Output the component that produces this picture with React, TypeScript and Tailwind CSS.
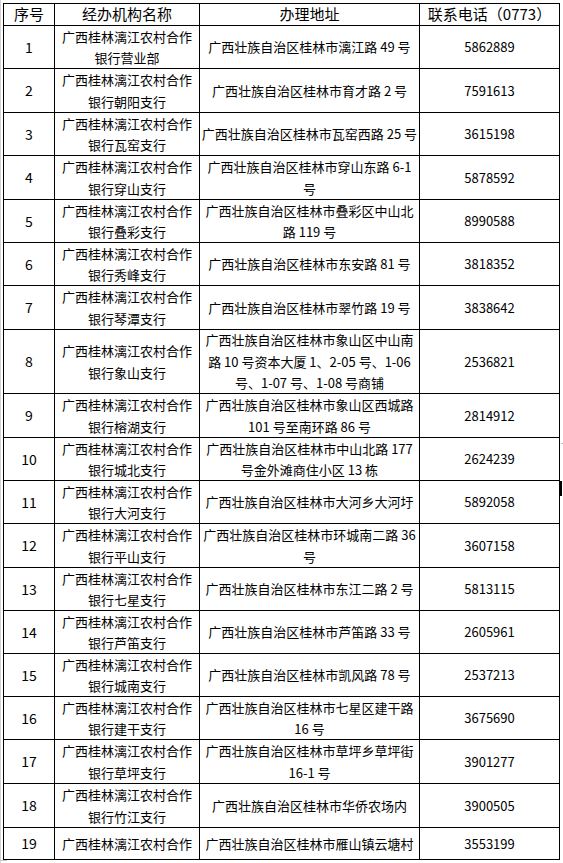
const rows: { no: string; name: string[]; addr: string[]; tel: string; h: string }[] = [
  { no: "1", name: ["广西桂林漓江农村合作", "银行营业部"], addr: ["广西壮族自治区桂林市漓江路 49 号"], tel: "5862889", h: "h-[43px]" },
  { no: "2", name: ["广西桂林漓江农村合作", "银行朝阳支行"], addr: ["广西壮族自治区桂林市育才路 2 号"], tel: "7591613", h: "h-[44px]" },
  { no: "3", name: ["广西桂林漓江农村合作", "银行瓦窑支行"], addr: ["广西壮族自治区桂林市瓦窑西路 25 号"], tel: "3615198", h: "h-[43px]" },
  { no: "4", name: ["广西桂林漓江农村合作", "银行穿山支行"], addr: ["广西壮族自治区桂林市穿山东路 6-1", "号"], tel: "5878592", h: "h-[44px]" },
  { no: "5", name: ["广西桂林漓江农村合作", "银行叠彩支行"], addr: ["广西壮族自治区桂林市叠彩区中山北", "路 119 号"], tel: "8990588", h: "h-[43px]" },
  { no: "6", name: ["广西桂林漓江农村合作", "银行秀峰支行"], addr: ["广西壮族自治区桂林市东安路 81 号"], tel: "3818352", h: "h-[43px]" },
  { no: "7", name: ["广西桂林漓江农村合作", "银行琴潭支行"], addr: ["广西壮族自治区桂林市翠竹路 19 号"], tel: "3838642", h: "h-[44px]" },
  {
    no: "8",
    name: ["广西桂林漓江农村合作", "银行象山支行"],
    addr: ["广西壮族自治区桂林市象山区中山南", "路 10 号资本大厦 1、2-05 号、1-06", "号、1-07 号、1-08 号商铺"],
    tel: "2536821",
    h: "h-[64px]",
  },
  { no: "9", name: ["广西桂林漓江农村合作", "银行榕湖支行"], addr: ["广西壮族自治区桂林市象山区西城路", "101 号至南环路 86 号"], tel: "2814912", h: "h-[44px]" },
  { no: "10", name: ["广西桂林漓江农村合作", "银行城北支行"], addr: ["广西壮族自治区桂林市中山北路 177", "号金外滩商住小区 13 栋"], tel: "2624239", h: "h-[43px]" },
  { no: "11", name: ["广西桂林漓江农村合作", "银行大河支行"], addr: ["广西壮族自治区桂林市大河乡大河圩"], tel: "5892058", h: "h-[43px]" },
  { no: "12", name: ["广西桂林漓江农村合作", "银行平山支行"], addr: ["广西壮族自治区桂林市环城南二路 36", "号"], tel: "3607158", h: "h-[44px]" },
  { no: "13", name: ["广西桂林漓江农村合作", "银行七星支行"], addr: ["广西壮族自治区桂林市东江二路 2 号"], tel: "5813115", h: "h-[43px]" },
  { no: "14", name: ["广西桂林漓江农村合作", "银行芦笛支行"], addr: ["广西壮族自治区桂林市芦笛路 33 号"], tel: "2605961", h: "h-[43px]" },
  { no: "15", name: ["广西桂林漓江农村合作", "银行城南支行"], addr: ["广西壮族自治区桂林市凯风路 78 号"], tel: "2537213", h: "h-[43px]" },
  { no: "16", name: ["广西桂林漓江农村合作", "银行建干支行"], addr: ["广西壮族自治区桂林市七星区建干路", "16 号"], tel: "3675690", h: "h-[43px]" },
  { no: "17", name: ["广西桂林漓江农村合作", "银行草坪支行"], addr: ["广西壮族自治区桂林市草坪乡草坪街", "16-1 号"], tel: "3901277", h: "h-[44px]" },
  { no: "18", name: ["广西桂林漓江农村合作", "银行竹江支行"], addr: ["广西壮族自治区桂林市华侨农场内"], tel: "3900505", h: "h-[44px]" },
  { no: "19", name: ["广西桂林漓江农村合作"], addr: ["广西壮族自治区桂林市雁山镇云塘村"], tel: "3553199", h: "h-[32px]" },
];

function Cell({ w, children, className = "" }: { w: string; children: React.ReactNode; className?: string }) {
  return (
    <div className={`${w} shrink-0 flex flex-col items-center justify-center border-r border-b border-black text-center ${className}`}>
      {children}
    </div>
  );
}

function Lines({ lines }: { lines: string[] }) {
  return (
    <>
      {lines.map((l) => (
        <div key={l} className="whitespace-nowrap leading-[21.5px]">
          {l}
        </div>
      ))}
    </>
  );
}

export default function App() {
  return (
    <div
      className="relative w-[563px] h-[863px] bg-white text-black overflow-hidden border-l border-[#d4d4d4]"
      style={{ fontFamily: '"Noto Sans CJK SC", "Liberation Sans", sans-serif' }}
    >
      <div className="ml-[2px] mt-[3px] w-[557px] border-l border-t border-black">
        <div className="flex h-[22px] text-[15px]">
          <Cell w="w-[51px]">序号</Cell>
          <Cell w="w-[145px]">经办机构名称</Cell>
          <Cell w="w-[220px]">办理地址</Cell>
          <Cell w="w-[140px]">联系电话（0773）</Cell>
        </div>
        {rows.map((r) => (
          <div key={r.no} className={`flex ${r.h} text-[13px]`}>
            <Cell w="w-[51px]" className="text-[14px]">{r.no}</Cell>
            <Cell w="w-[145px]">
              <Lines lines={r.name} />
            </Cell>
            <Cell w="w-[220px]">
              <Lines lines={r.addr} />
            </Cell>
            <Cell w="w-[140px]">{r.tel}</Cell>
          </div>
        ))}
      </div>
      <div className="absolute left-[560px] top-[443px] w-[3px] h-px bg-[#bdbdbd]" />
      <div className="absolute left-[558px] top-[481px] w-[3px] h-[15px] bg-black" />
      <div className="absolute left-0 top-[860px] w-[6px] h-px bg-[#c8c8c8]" />
    </div>
  );
}
